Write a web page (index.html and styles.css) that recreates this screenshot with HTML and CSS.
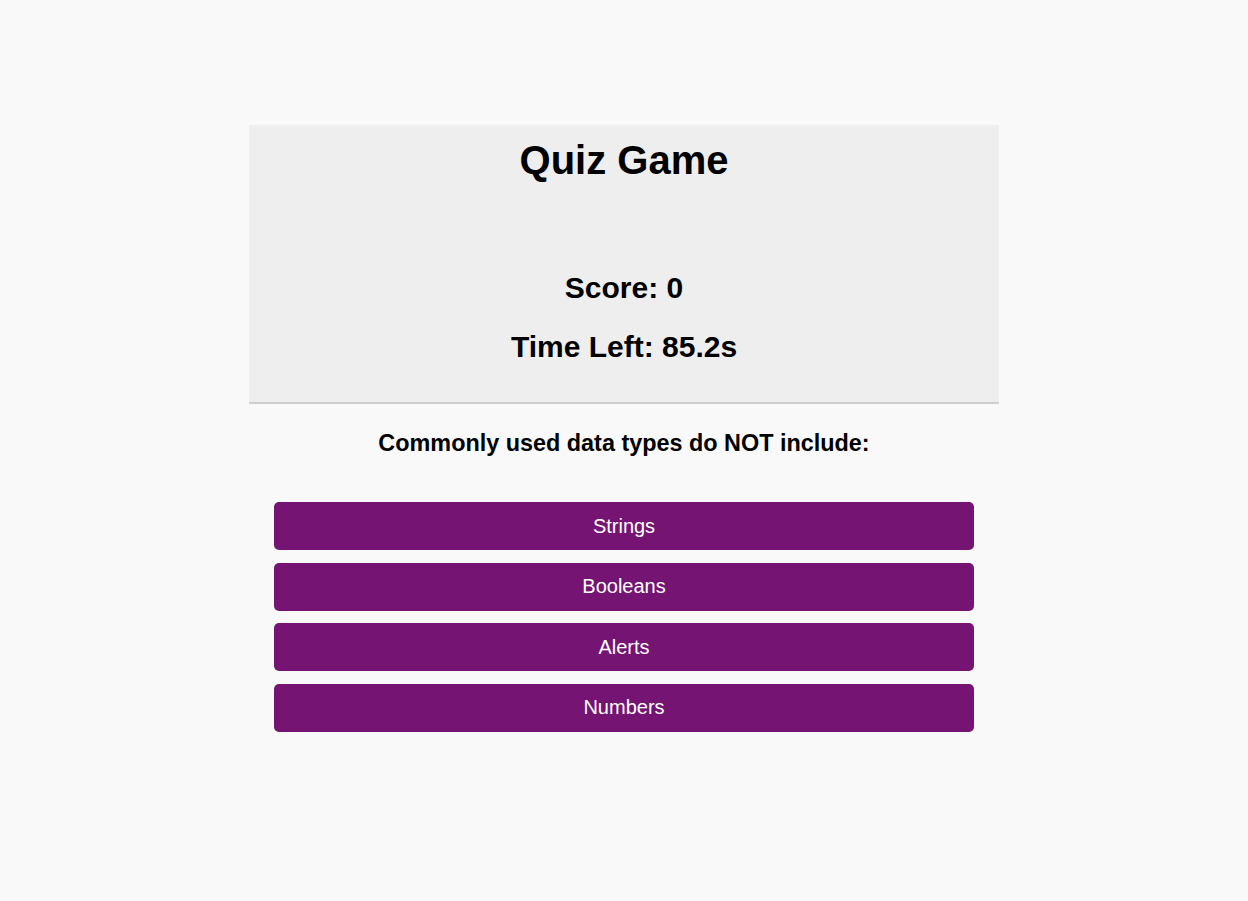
FILE: index.html
```html
<!DOCTYPE html>
<html lang="en">
<head>
<meta charset="utf-8">
<title>Quiz Game</title>
<link rel="stylesheet" href="styles.css">
</head>
<body>
<main class="quiz">
  <header class="board">
    <h1 class="title">Quiz Game</h1>
    <div class="stats">
      <p class="stat">Score: 0</p>
      <p class="stat">Time Left: 85.2s</p>
    </div>
  </header>
  <section class="question">
    <h2 class="prompt">Commonly used data types do NOT include:</h2>
    <div class="answers">
      <button class="answer">Strings</button>
      <button class="answer">Booleans</button>
      <button class="answer">Alerts</button>
      <button class="answer">Numbers</button>
    </div>
  </section>
</main>
</body>
</html>
```

FILE: styles.css
```css
html, body {
  margin: 0;
  padding: 0;
  background: #f9f9f9;
  font-family: "Liberation Sans", Arial, sans-serif;
  color: #000;
}

.quiz {
  width: 750px;
  margin: 125px auto 0;
}

.board {
  background: #eeeeee;
  border-bottom: 2px solid #cfcfcf;
  text-align: center;
  padding: 15px 0 41px;
}

.title {
  font-size: 40px;
  margin: 0;
  line-height: 40px;
}

.stats {
  margin-top: 94px;
  display: flex;
  flex-direction: column;
  gap: 31px;
}

.stat {
  margin: 0;
  font-size: 30px;
  font-weight: bold;
  line-height: 28px;
}

.question {
  text-align: center;
}

.prompt {
  font-size: 23.4px;
  margin: 26px 0 0;
  line-height: 26px;
}

.answers {
  margin: 46px auto 0;
  width: 700px;
  display: flex;
  flex-direction: column;
  gap: 12.67px;
}

.answer {
  height: 48px;
  border: 0;
  border-radius: 5px;
  background: #751473;
  color: #fff;
  font-family: "Liberation Sans", Arial, sans-serif;
  font-size: 20px;
  cursor: pointer;
}
```
